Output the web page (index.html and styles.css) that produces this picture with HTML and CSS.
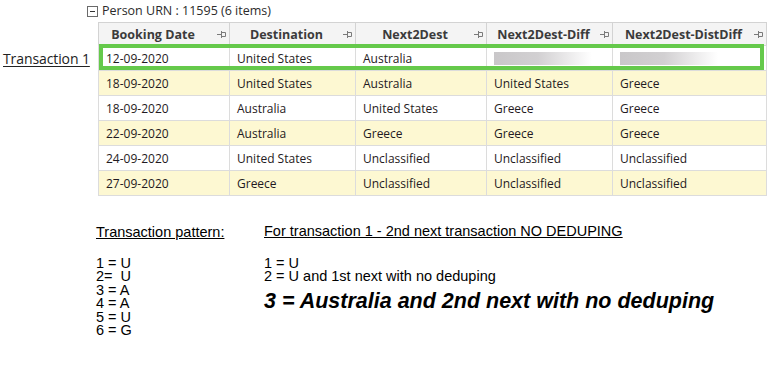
FILE: index.html
```html
<!DOCTYPE html>
<html>
<head>
<meta charset="utf-8">
<link rel="stylesheet" href="styles.css">
</head>
<body>
<div class="page">
  <div class="group-head">
    <span class="minus-box"><span class="minus"></span></span>
    <span class="group-title">Person URN : 11595 (6 items)</span>
  </div>
  <div class="grid-row">
    <div class="side-label"><span class="tx-label">Transaction 1</span></div>
    <div class="grid-wrap">
      <table class="grid">
        <colgroup>
          <col class="c1"><col class="c2"><col class="c3"><col class="c4"><col class="c5">
        </colgroup>
        <thead>
          <tr>
            <th class="first"><span class="th-text">Booking Date</span><svg class="pin" viewBox="0 0 9 8" width="9" height="8"><path d="M0 3.5H4M4.5 0V7M4.5 1.5H8.5V5.5H4.5" fill="none" stroke="#7a7a7a" stroke-width="1"/></svg></th>
            <th><span class="th-text">Destination</span><svg class="pin" viewBox="0 0 9 8" width="9" height="8"><path d="M0 3.5H4M4.5 0V7M4.5 1.5H8.5V5.5H4.5" fill="none" stroke="#7a7a7a" stroke-width="1"/></svg></th>
            <th><span class="th-text">Next2Dest</span><svg class="pin" viewBox="0 0 9 8" width="9" height="8"><path d="M0 3.5H4M4.5 0V7M4.5 1.5H8.5V5.5H4.5" fill="none" stroke="#7a7a7a" stroke-width="1"/></svg></th>
            <th><span class="th-text">Next2Dest-Diff</span><svg class="pin" viewBox="0 0 9 8" width="9" height="8"><path d="M0 3.5H4M4.5 0V7M4.5 1.5H8.5V5.5H4.5" fill="none" stroke="#7a7a7a" stroke-width="1"/></svg></th>
            <th><span class="th-text">Next2Dest-DistDiff</span><svg class="pin" viewBox="0 0 9 8" width="9" height="8"><path d="M0 3.5H4M4.5 0V7M4.5 1.5H8.5V5.5H4.5" fill="none" stroke="#7a7a7a" stroke-width="1"/></svg></th>
          </tr>
        </thead>
        <tbody>
          <tr><td>12-09-2020</td><td>United States</td><td>Australia</td><td><span class="blur"></span></td><td><span class="blur"></span></td></tr>
          <tr class="alt"><td>18-09-2020</td><td>United States</td><td>Australia</td><td>United States</td><td>Greece</td></tr>
          <tr><td>18-09-2020</td><td>Australia</td><td>United States</td><td>Greece</td><td>Greece</td></tr>
          <tr class="alt"><td>22-09-2020</td><td>Australia</td><td>Greece</td><td>Greece</td><td>Greece</td></tr>
          <tr><td>24-09-2020</td><td>United States</td><td>Unclassified</td><td>Unclassified</td><td>Unclassified</td></tr>
          <tr class="alt"><td>27-09-2020</td><td>Greece</td><td>Unclassified</td><td>Unclassified</td><td>Unclassified</td></tr>
        </tbody>
      </table>
      <div class="highlight"></div>
    </div>
  </div>
  <div class="notes">
    <div class="notes-left">
      <div class="note-head">Transaction pattern:</div>
      <p class="note-lines">1 = U<br>2=&nbsp; U<br>3 = A<br>4 = A<br>5 = U<br>6 = G</p>
    </div>
    <div class="notes-right">
      <div class="note-head">For transaction 1 - 2nd next transaction NO DEDUPING</div>
      <p class="note-lines">1 = U<br>2 = U and 1st next with no deduping</p>
      <div class="note-big">3 = Australia and 2nd next with no deduping</div>
    </div>
  </div>
</div>
</body>
</html>
```
FILE: styles.css
```css
* { box-sizing: border-box; }
html, body { margin: 0; padding: 0; background: #fff; }
body { width: 769px; height: 371px; overflow: hidden; font-family: "Open Sans", "Noto Sans", sans-serif; }

.page { padding-top: 3px; }

.group-head {
  display: flex;
  align-items: center;
  height: 16px;
  padding-left: 87px;
  gap: 4px;
}
.minus-box {
  width: 11px; height: 11px;
  border: 1px solid #6a6a6a;
  display: flex; align-items: center; justify-content: center;
  background: #fff;
}
.minus { width: 5px; height: 1px; background: #333; }
.group-title { font-size: 12.5px; color: #2b2b2b; line-height: 16px; }

.grid-row { display: flex; margin-top: 3px; }
.side-label { width: 98px; padding-left: 3px; padding-top: 25px; }
.tx-label {
  font-size: 14px; color: #222; text-decoration: underline;
  text-underline-offset: 2px; line-height: 18px; letter-spacing: -0.1px;
}

.grid-wrap { position: relative; width: 668px; }
.grid {
  border-collapse: collapse;
  table-layout: fixed;
  width: 668px;
  font-size: 12px;
}
.c1 { width: 131px; } .c2 { width: 126px; } .c3 { width: 131px; } .c4 { width: 126px; } .c5 { width: 154px; }

.grid th {
  height: 23px;
  background: #f4f4f4;
  border: 1px solid #d3d3d3;
  border-bottom: 1px solid #d9d9d9;
  font-weight: 700;
  font-size: 12.5px;
  color: #3b3b3b;
  padding: 0 12px 0 0;
  position: relative;
  text-align: center;
  white-space: nowrap;
}
.grid th.first { padding-right: 22px; }
.th-text { display: inline-block; }
.pin { position: absolute; right: 3px; top: 8px; }

.grid td {
  height: 25px;
  border: 1px solid #dcdcdc;
  border-top: 0;
  padding: 0 0 0 7px;
  color: #1f1a22;
  white-space: nowrap;
  background: #fff;
}
.grid tr.alt td { background: #fdf8d2; }

.blur {
  display: block;
  width: 98px; height: 13px;
  background: linear-gradient(to right, #c9c7c9 0%, #d2d0d2 45%, #ffffff 100%);
}

.highlight {
  position: absolute;
  left: 1px; top: 22px;
  width: 665px; height: 26px;
  border: 4px solid #65c94b;
  pointer-events: none;
}

.notes {
  display: flex;
  margin-top: 27px;
  font-family: "Liberation Sans", Arial, sans-serif;
  font-size: 14.5px;
  color: #000;
}
.notes-left { width: 264px; padding-left: 96px; }
.notes-right { flex: 1; }
.note-head {
  text-decoration: underline;
  text-underline-offset: 1px;
  line-height: 16px;
  margin-bottom: 18px;
}
.notes-left .note-head { padding-top: 1px; margin-bottom: 17px; }
.note-lines { margin: 0; line-height: 13.4px; }
.note-big {
  font-size: 21.5px;
  font-weight: 700;
  font-style: italic;
  line-height: 21px;
  margin-top: 7px;
}
```
